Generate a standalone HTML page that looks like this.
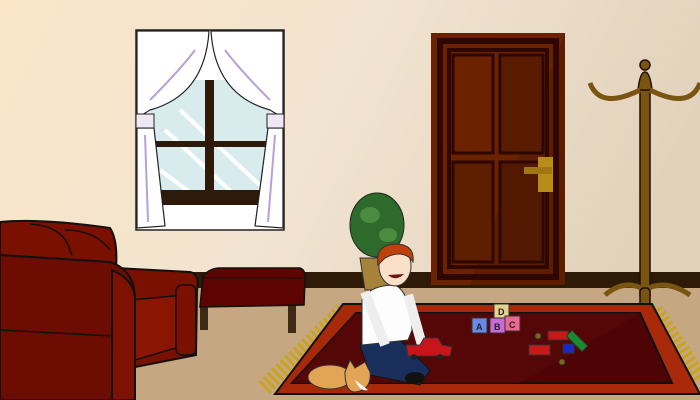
<!DOCTYPE html>
<html><head><meta charset="utf-8"><style>
html,body{margin:0;padding:0;width:700px;height:400px;overflow:hidden}
svg{display:block}
text{font-family:"Liberation Sans",sans-serif;font-weight:bold}
</style></head><body>
<svg width="700" height="400" viewBox="0 0 700 400" xmlns="http://www.w3.org/2000/svg">
<defs>
<linearGradient id="wall" x1="0" y1="0" x2="1" y2="0.3">
<stop offset="0" stop-color="#fbe6c8"/><stop offset="0.5" stop-color="#f1e4d0"/><stop offset="1" stop-color="#e2d2bc"/>
</linearGradient>
</defs>
<rect width="700" height="400" fill="url(#wall)"/>
<rect x="190" y="272" width="510" height="18" fill="#2f1a08"/>
<rect x="0" y="288" width="700" height="112" fill="#c5a781"/>

<!-- window -->
<rect x="136" y="30" width="148" height="200" fill="#fff" stroke="#222" stroke-width="1.5"/>
<rect x="150" y="80" width="120" height="125" fill="#d8ecee"/>
<path d="M165 130 L240 200 M180 110 L265 190 M160 170 L200 200" stroke="#fff" stroke-width="4"/>
<rect x="150" y="190" width="120" height="15" fill="#2e1a0a"/>
<rect x="205" y="80" width="9" height="125" fill="#2e1a0a"/>
<rect x="150" y="141" width="120" height="6" fill="#2e1a0a"/>
<path d="M137 31 L209 31 Q205 95 150 110 L137 118 Z" fill="#fff" stroke="#222" stroke-width="1.2"/>
<path d="M283 31 L211 31 Q215 95 270 110 L283 118 Z" fill="#fff" stroke="#222" stroke-width="1.2"/>
<path d="M150 100 Q180 70 195 50 M270 100 Q240 70 225 50" stroke="#b8a0d8" stroke-width="2" fill="none"/>
<path d="M137 128 L154 128 L165 226 L137 228 Z" fill="#fff" stroke="#222" stroke-width="1.2"/>
<path d="M283 128 L268 128 L255 226 L283 228 Z" fill="#fff" stroke="#222" stroke-width="1.2"/>
<path d="M145 135 L148 222 M275 135 L268 222" stroke="#b8a0d8" stroke-width="2"/>
<rect x="136" y="114" width="18" height="14" fill="#efe6f6" stroke="#222"/>
<rect x="267" y="114" width="17" height="14" fill="#efe6f6" stroke="#222"/>

<!-- door -->
<rect x="431" y="33" width="134" height="252" fill="#6a2200"/>
<path d="M565 33 L565 285 L470 285 Z" fill="#581a00" opacity="0.6"/>
<rect x="440" y="41" width="116" height="236" fill="none" stroke="#2e0700" stroke-width="6"/>
<rect x="449" y="50" width="98" height="217" fill="none" stroke="#2e0700" stroke-width="4"/>
<rect x="453" y="55" width="40" height="98" fill="#6a2200" stroke="#2e0700" stroke-width="3"/>
<rect x="500" y="55" width="43" height="98" fill="#5a1c00" stroke="#2e0700" stroke-width="3"/>
<rect x="453" y="162" width="40" height="100" fill="#5e1e00" stroke="#2e0700" stroke-width="3"/>
<rect x="500" y="162" width="43" height="100" fill="#521800" stroke="#2e0700" stroke-width="3"/>
<rect x="538" y="157" width="15" height="35" fill="#b98c1a"/>
<rect x="524" y="167" width="28" height="7" fill="#a07514"/>

<!-- coat rack -->
<g stroke="#1e1000" stroke-width="1.5" fill="#7a5512">
<rect x="640" y="80" width="10" height="215"/>
<circle cx="645" cy="65" r="5"/>
<path d="M638 90 Q640 72 645 72 Q650 72 652 90 Z"/>
<path d="M590 83 Q600 110 640 90" fill="none" stroke="#7a5512" stroke-width="5"/>
<path d="M700 83 Q690 110 650 90" fill="none" stroke="#7a5512" stroke-width="5"/>
<path d="M605 295 Q625 278 645 290 Q665 278 690 295" fill="none" stroke="#7a5512" stroke-width="5"/>
<rect x="640" y="288" width="10" height="25" rx="4"/>
</g>

<!-- rug -->
<path d="M343 310 L262 390 M655 310 L700 378" stroke="#c9a41e" stroke-width="16" stroke-dasharray="3 3"/>
<polygon points="343,304 652,304 700,394 275,394" fill="#a8290a" stroke="#111" stroke-width="2"/>
<polygon points="356,313 640,313 672,383 292,383" fill="#4e0404" stroke="#111" stroke-width="2"/>
<polygon points="356,313 640,313 520,383 292,383" fill="#5a0808" opacity="0.6"/>

<!-- plant -->
<path d="M360 258 L392 258 L388 290 L365 290 Z" fill="#a6823a" stroke="#333"/>
<ellipse cx="377" cy="225" rx="27" ry="32" fill="#2e6a2c" stroke="#1a2a1a"/>
<ellipse cx="370" cy="215" rx="10" ry="8" fill="#4b8b40"/>
<ellipse cx="388" cy="235" rx="9" ry="7" fill="#4b8b40"/>

<!-- sofa -->
<path d="M0 222 Q40 218 110 228 Q118 240 116 268 L190 272 Q200 274 197 290 L196 355 L120 370 L0 380 Z" fill="#7a1000" stroke="#111" stroke-width="2"/>
<path d="M30 224 Q60 226 68 245 L72 255 M65 230 Q95 230 110 250" stroke="#111" stroke-width="1.5" fill="none"/>
<path d="M130 300 L185 295 L186 345 L135 360 Z" fill="#8a1500" stroke="#111" stroke-width="1.5"/>
<path d="M0 255 L110 262 Q135 270 135 300 L135 400 L0 400 Z" fill="#6d0c00" stroke="#111" stroke-width="2"/>
<path d="M112 270 Q135 280 135 300 L135 400 L112 400 Z" fill="#7e1200" stroke="#111" stroke-width="2"/>
<path d="M0 330 L112 336" stroke="#111" stroke-width="1.5"/>
<rect x="176" y="285" width="20" height="70" rx="6" fill="#7a1000" stroke="#111" stroke-width="1.5"/>

<!-- ottoman -->
<rect x="200" y="305" width="8" height="25" fill="#3c2a14"/>
<rect x="288" y="305" width="8" height="28" fill="#3c2a14"/>
<path d="M203 276 Q210 268 220 268 L300 268 Q306 270 305 280 L304 305 L200 307 Z" fill="#5e0400" stroke="#111" stroke-width="1.5"/>
<path d="M203 278 L303 278" stroke="#111"/>

<!-- boy -->
<path d="M360 345 Q370 330 395 335 L430 370 L420 385 L370 375 Z" fill="#1a2e5c" stroke="#111"/>
<path d="M362 300 Q370 285 395 285 Q410 292 412 330 L408 340 L362 345 Z" fill="#fdfdfd" stroke="#333"/>
<path d="M365 292 L385 345 M408 295 L422 345" stroke="#eee" stroke-width="10"/>
<ellipse cx="395" cy="266" rx="16" ry="20" fill="#fbe0c8" stroke="#333"/>
<path d="M378 265 Q375 245 395 244 Q415 244 413 262 L410 258 Q400 250 385 258 Z" fill="#c0400c" stroke="#333"/>
<path d="M388 275 Q396 282 404 274" fill="#6b1a10"/>
<ellipse cx="415" cy="378" rx="10" ry="6" fill="#111"/>
<path d="M406 345 L420 345 L424 338 L438 338 L442 345 L452 347 L450 356 L408 356 Z" fill="#c8141a" stroke="#333"/>
<circle cx="414" cy="357" r="3" fill="#222"/><circle cx="440" cy="357" r="3" fill="#222"/>

<!-- dog -->
<ellipse cx="330" cy="377" rx="22" ry="12" fill="#e2a455" stroke="#333"/>
<path d="M345 372 L350 360 L355 368 L365 362 L370 372 Q372 390 355 392 Q345 392 345 372 Z" fill="#e2a455" stroke="#333"/>
<path d="M355 380 Q360 392 368 390" fill="#fff"/>

<!-- blocks -->
<g stroke="#333" stroke-width="1" font-size="9">
<rect x="494" y="304" width="15" height="14" fill="#e6d28e"/><text x="498" y="315" fill="#222" stroke="none">D</text>
<rect x="472" y="318" width="15" height="15" fill="#6a8ae8"/><text x="476" y="330" fill="#222" stroke="none">A</text>
<rect x="490" y="318" width="15" height="15" fill="#c86ad8"/><text x="494" y="330" fill="#222" stroke="none">B</text>
<rect x="505" y="316" width="15" height="15" fill="#e86a90"/><text x="509" y="328" fill="#222" stroke="none">C</text>
<rect x="548" y="331" width="20" height="9" fill="#c81818"/>
<rect x="529" y="345" width="21" height="10" fill="#c81818"/>
<rect x="573" y="330" width="8" height="22" fill="#1a8a30" transform="rotate(-45 577 341)"/>
<rect x="563" y="344" width="11" height="9" fill="#1a28c8"/>
<circle cx="538" cy="336" r="3" fill="#7a6a18"/><circle cx="562" cy="362" r="3" fill="#7a6a18"/>
</g>
</svg>
</body></html>
